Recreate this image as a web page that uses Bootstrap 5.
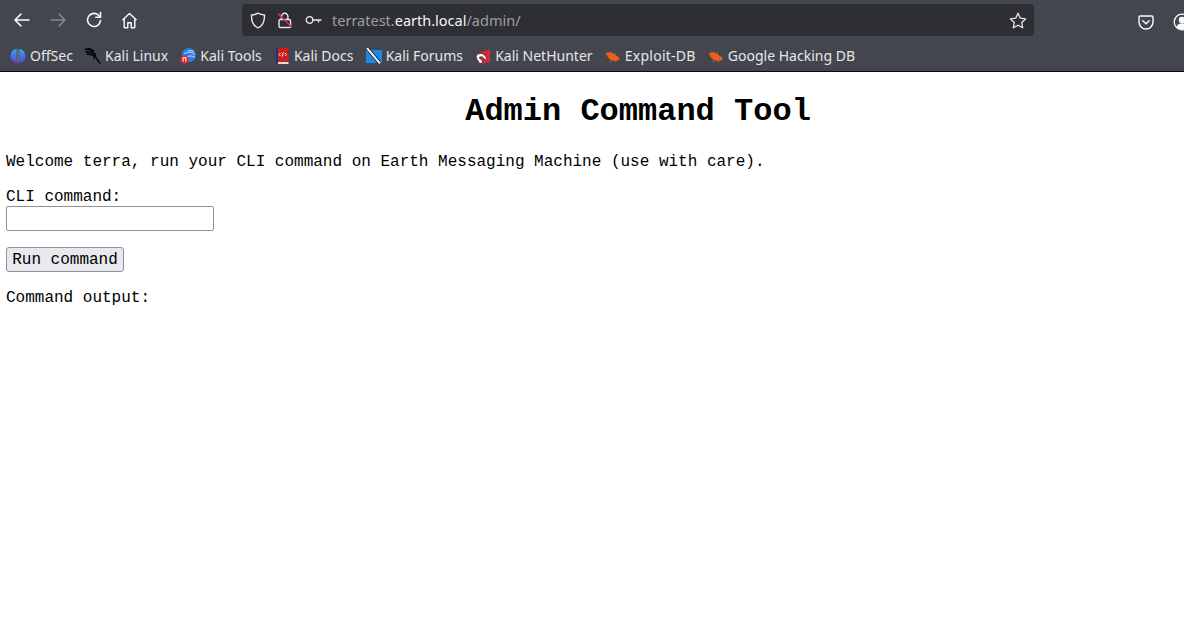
<!DOCTYPE html>
<html lang="en">
<head>
<meta charset="utf-8">
<title>Admin Command Tool</title>
<link href="https://cdn.jsdelivr.net/npm/bootstrap@5.3.0/dist/css/bootstrap.min.css" rel="stylesheet">
<style>
html,body{margin:0;height:633px;overflow:hidden;background:#fff}
.shell{width:1276px;font-family:"Liberation Mono",monospace;font-size:16px;line-height:18px;color:#000}
.chrome{background:#43464e;height:72px;border-bottom:1px solid #0c0c0d;font-family:"Noto Sans",sans-serif;color:#fbfbfe}
.toprow{height:40px;padding-top:4px}
.navicons{width:242px;height:32px;padding-left:13px;gap:18px}
.urlbar{width:792px;height:32px;background:#2e2f35;border-radius:4px;padding:0 7px 0 8px;font-size:14.5px;line-height:32px}
.urltext{margin-left:10px;color:#f4f4f6}
.urlmute{color:#9d9ea3}
.lockwrap{margin-left:11px;margin-right:12px}
.rightic{margin-left:104px;gap:19px}
.bookmarks{height:31px;padding-left:10px;font-size:14px;line-height:31px;gap:12.2px}
.bm{gap:4px;white-space:nowrap;color:#e6e6ea}
.bmwide{letter-spacing:.25px}
.pagebody{padding:0 6px}
.headline{font-family:"Liberation Mono",monospace;font-size:32px;font-weight:700;line-height:36px;text-align:center;margin:22px 0 0;width:1264px}
.welcome{margin:23px 0 0}
.fieldlbl{margin:17px 0 0;display:block}
.cmdinput{display:block;width:208px;height:25px;border:1px solid #8f8f9d;border-radius:2px;background:#fff;padding:0 2px;margin-top:0}
.runbtn{display:block;margin-top:16px;width:118px;height:25px;background:#e9e9ed;border:1px solid #8f8f9d;border-radius:3px;padding:0;font-family:"Liberation Mono",monospace;font-size:16px;line-height:18px;color:#000}
.outlbl{margin:17px 0 0}
svg{display:block;flex:none}
</style>
</head>
<body>
<div class="shell">
  <div class="chrome">
    <div class="toprow d-flex">
      <div class="navicons d-flex align-items-center">
        <svg width="18" height="16" viewBox="0 0 18 16" fill="none" stroke="#fbfbfe" stroke-width="1.6" stroke-linecap="round" stroke-linejoin="round"><path d="M16 8H2M8 2 2 8l6 6"/></svg>
        <svg width="18" height="16" viewBox="0 0 18 16" fill="none" stroke="#85868b" stroke-width="1.6" stroke-linecap="round" stroke-linejoin="round"><path d="M2 8h14M10 2l6 6-6 6"/></svg>
        <svg width="18" height="18" viewBox="0 0 18 18" fill="none" stroke="#fbfbfe" stroke-width="1.6" stroke-linecap="round" stroke-linejoin="round"><path d="M15.500 9.500A6.500 6.500 0 1 1 13 3.800L15.200 6"/><path d="M15.500 1.500V6.200H10.800"/></svg>
        <svg width="17" height="17" viewBox="0 0 17 17" fill="none" stroke="#fbfbfe" stroke-width="1.4" stroke-linejoin="round"><path d="M1.500 8 8.500 1.500 15.500 8M3.200 6.800V15a.8.8 0 0 0 .8.8h2.800v-5h3.400v5H13a.8.8 0 0 0 .8-.8V6.800"/></svg>
      </div>
      <div class="urlbar d-flex align-items-center">
        <svg width="16" height="17" viewBox="0 0 16 17" fill="none" stroke="#e8e8ea" stroke-width="1.4" stroke-linejoin="round"><path d="M8 1.200c2 1.200 4.200 1.700 6.500 1.800.2 6-1.600 10.700-6.500 12.800C3.100 13.700 1.300 9 1.500 3 3.800 2.900 6 2.400 8 1.200z"/></svg>
        <div class="lockwrap"><svg width="16" height="17" viewBox="0 0 16 17" fill="none" stroke-width="1.4"><path d="M4.500 7V4.500a3.200 3.200 0 0 1 6.400 0V7" stroke="#e8e8ea"/><rect x="2" y="7.500" width="11.500" height="8" rx="1.300" stroke="#e8e8ea"/><path d="M1 1.500 15 15.500" stroke="#e22850" stroke-width="1.500"/></svg></div>
        <svg width="17" height="10" viewBox="0 0 17 10" fill="none" stroke="#e8e8ea" stroke-width="1.3"><circle cx="4.500" cy="5" r="3.300"/><path d="M8 5h8.500M13.500 5v2.500"/></svg>
        <div class="urltext flex-grow-1"><span class="urlmute">terratest.</span>earth.local<span class="urlmute">/admin/</span></div>
        <svg width="18" height="17" viewBox="0 0 18 17" fill="none" stroke="#e8e8ea" stroke-width="1.3" stroke-linejoin="round"><path d="M9 1.300l2.300 4.900 5.300.7-3.900 3.600 1 5.300L9 13.200l-4.700 2.600 1-5.300L1.400 6.900l5.300-.7z"/></svg>
      </div>
      <div class="rightic d-flex align-items-center">
        <svg width="16" height="15" viewBox="0 0 16 15" fill="none" stroke="#fbfbfe" stroke-width="1.4" stroke-linecap="round" stroke-linejoin="round"><path d="M2.200 1h11.600c.7 0 1.200.5 1.200 1.200V7a7 7 0 0 1-14 0V2.200C1 1.500 1.500 1 2.200 1z"/><path d="M4.800 5.800 8 8.800l3.200-3"/></svg>
        <svg width="18" height="18" viewBox="0 0 18 18"><circle cx="9" cy="9" r="7.800" fill="none" stroke="#fbfbfe" stroke-width="1.3"/><circle cx="9" cy="7" r="3.200" fill="#fbfbfe"/><path d="M3.500 14c1-3 3-3.800 5.500-3.800s4.500.8 5.500 3.800A7.500 7.500 0 0 1 3.500 14z" fill="#fbfbfe"/></svg>
      </div>
    </div>
    <div class="bookmarks d-flex align-items-center">
      <span class="bm d-flex align-items-center"><svg width="16" height="16" viewBox="0 0 16 16"><defs><linearGradient id="g1" x1="0" y1="0" x2="0" y2="1"><stop offset="0" stop-color="#2ab4e6"/><stop offset="1" stop-color="#6a35d4"/></linearGradient></defs><path d="M6.600 .8v14.400A7.300 7.300 0 0 1 6.600 .8zM9.400 .8a7.300 7.300 0 0 1 0 14.400z" fill="url(#g1)"/><path d="M7.500 1.500h1v13h-1z" fill="#7f8fa8"/></svg>OffSec</span>
      <span class="bm d-flex align-items-center"><svg width="16" height="16" viewBox="0 0 16 16" fill="none" stroke="#000" stroke-width="1.4" stroke-linecap="round"><path d="M0 1c3 .2 6 1 8 2.700 2 1.600 2.800 3.600 3 5.600.2 1.800 1.500 3 4 5.700"/><path d="M1 3.800c2.500-.2 5 .3 7 2.200 1 1 1.500 2.500 1 4.500M2 6c2 0 3.500.3 5 1.300M3 .5C5 .8 7 1.500 8.500 2.800"/></svg>Kali Linux</span>
      <span class="bm d-flex align-items-center"><svg width="16" height="16" viewBox="0 0 16 16"><circle cx="8.800" cy="7" r="7" fill="#2f7fe6"/><path d="M4 6c3-2.500 7-2.500 11 .5M7 9c2-1.500 5-1.300 8 .5M8 3c2-.8 4-.5 6 .8" fill="none" stroke="#d6e7fb" stroke-width=".9"/><circle cx="4.500" cy="11.500" r="4.300" fill="#d92b2b"/><path d="M3.200 10v3.500M5.800 10v3.500M2.500 9.800h4" stroke="#fff" stroke-width="1"/></svg>Kali Tools</span>
      <span class="bm d-flex align-items-center"><svg width="16" height="16" viewBox="0 0 16 16"><rect x="2" y="0" width="12.500" height="15" fill="#c81f1f"/><rect x="2" y="0" width="2" height="16" fill="#24306b"/><path d="M6.500 5 5 6.500 6.500 8M11 5l1.500 1.500L11 8M9.300 4.300 8.200 8.700" fill="none" stroke="#fff" stroke-width=".9"/><rect x="4" y="14" width="10.500" height="2" fill="#e8dcdc"/></svg>Kali Docs</span>
      <span class="bm d-flex align-items-center"><svg width="16" height="16" viewBox="0 0 16 16"><path d="M0 2h16v13H0z" fill="#1f86e8"/><path d="M1 0 14 15.500" stroke="#1a1a1a" stroke-width="3.600"/><path d="M1 0 14 15.500" stroke="#f3f3f3" stroke-width="2"/></svg>Kali Forums</span>
      <span class="bm d-flex align-items-center"><svg width="16" height="16" viewBox="0 0 16 16"><path d="M1 6 15 1v13l-8 2z" fill="#d8263c"/><path d="M1 8c3-4 8-3.500 10.500 2 .3 1.500-1.300 2.200-2.300 1-1-2.500-3.500-3-5.200-1.300 1.200.8 3 2.300 4 4.500l-3 1.500C3 13 1.500 11 1 8z" fill="#fff" stroke="#222" stroke-width=".7"/></svg>Kali NetHunter</span>
      <span class="bm d-flex align-items-center"><svg width="16" height="16" viewBox="0 0 16 16"><path d="M1 5c3-1.500 6.500-.2 9 1.500 1.800 1.200 3.500 2.800 5 4.500-2.800 2.600-7 2.200-9.800.3C3.200 10 1.600 7.800 1 5z" fill="#e8601c"/><path d="M5.500 5 6.500 3M9 6.500 10 4.500M11.500 10 14 7.500M6 11.500 5.500 14.500M10 12.500l.5 2" stroke="#e8601c" stroke-width=".8" fill="none"/></svg><span class="bmwide">Exploit-DB</span></span>
      <span class="bm d-flex align-items-center"><svg width="16" height="16" viewBox="0 0 16 16"><path d="M1 5c3-1.500 6.500-.2 9 1.500 1.800 1.200 3.500 2.800 5 4.500-2.800 2.600-7 2.200-9.800.3C3.200 10 1.600 7.800 1 5z" fill="#e8601c"/><path d="M5.500 5 6.500 3M9 6.500 10 4.500M11.500 10 14 7.500M6 11.500 5.500 14.500M10 12.500l.5 2" stroke="#e8601c" stroke-width=".8" fill="none"/></svg>Google Hacking DB</span>
    </div>
  </div>
  <div class="pagebody">
    <h1 class="headline">Admin Command Tool</h1>
    <p class="welcome">Welcome terra, run your CLI command on Earth Messaging Machine (use with care).</p>
    <form>
      <label class="fieldlbl" for="cli">CLI command:</label>
      <input class="cmdinput" id="cli" type="text">
      <button class="runbtn" type="button">Run command</button>
    </form>
    <p class="outlbl">Command output:</p>
  </div>
</div>
<script src="https://cdn.jsdelivr.net/npm/bootstrap@5.3.0/dist/js/bootstrap.bundle.min.js"></script>
</body>
</html>
